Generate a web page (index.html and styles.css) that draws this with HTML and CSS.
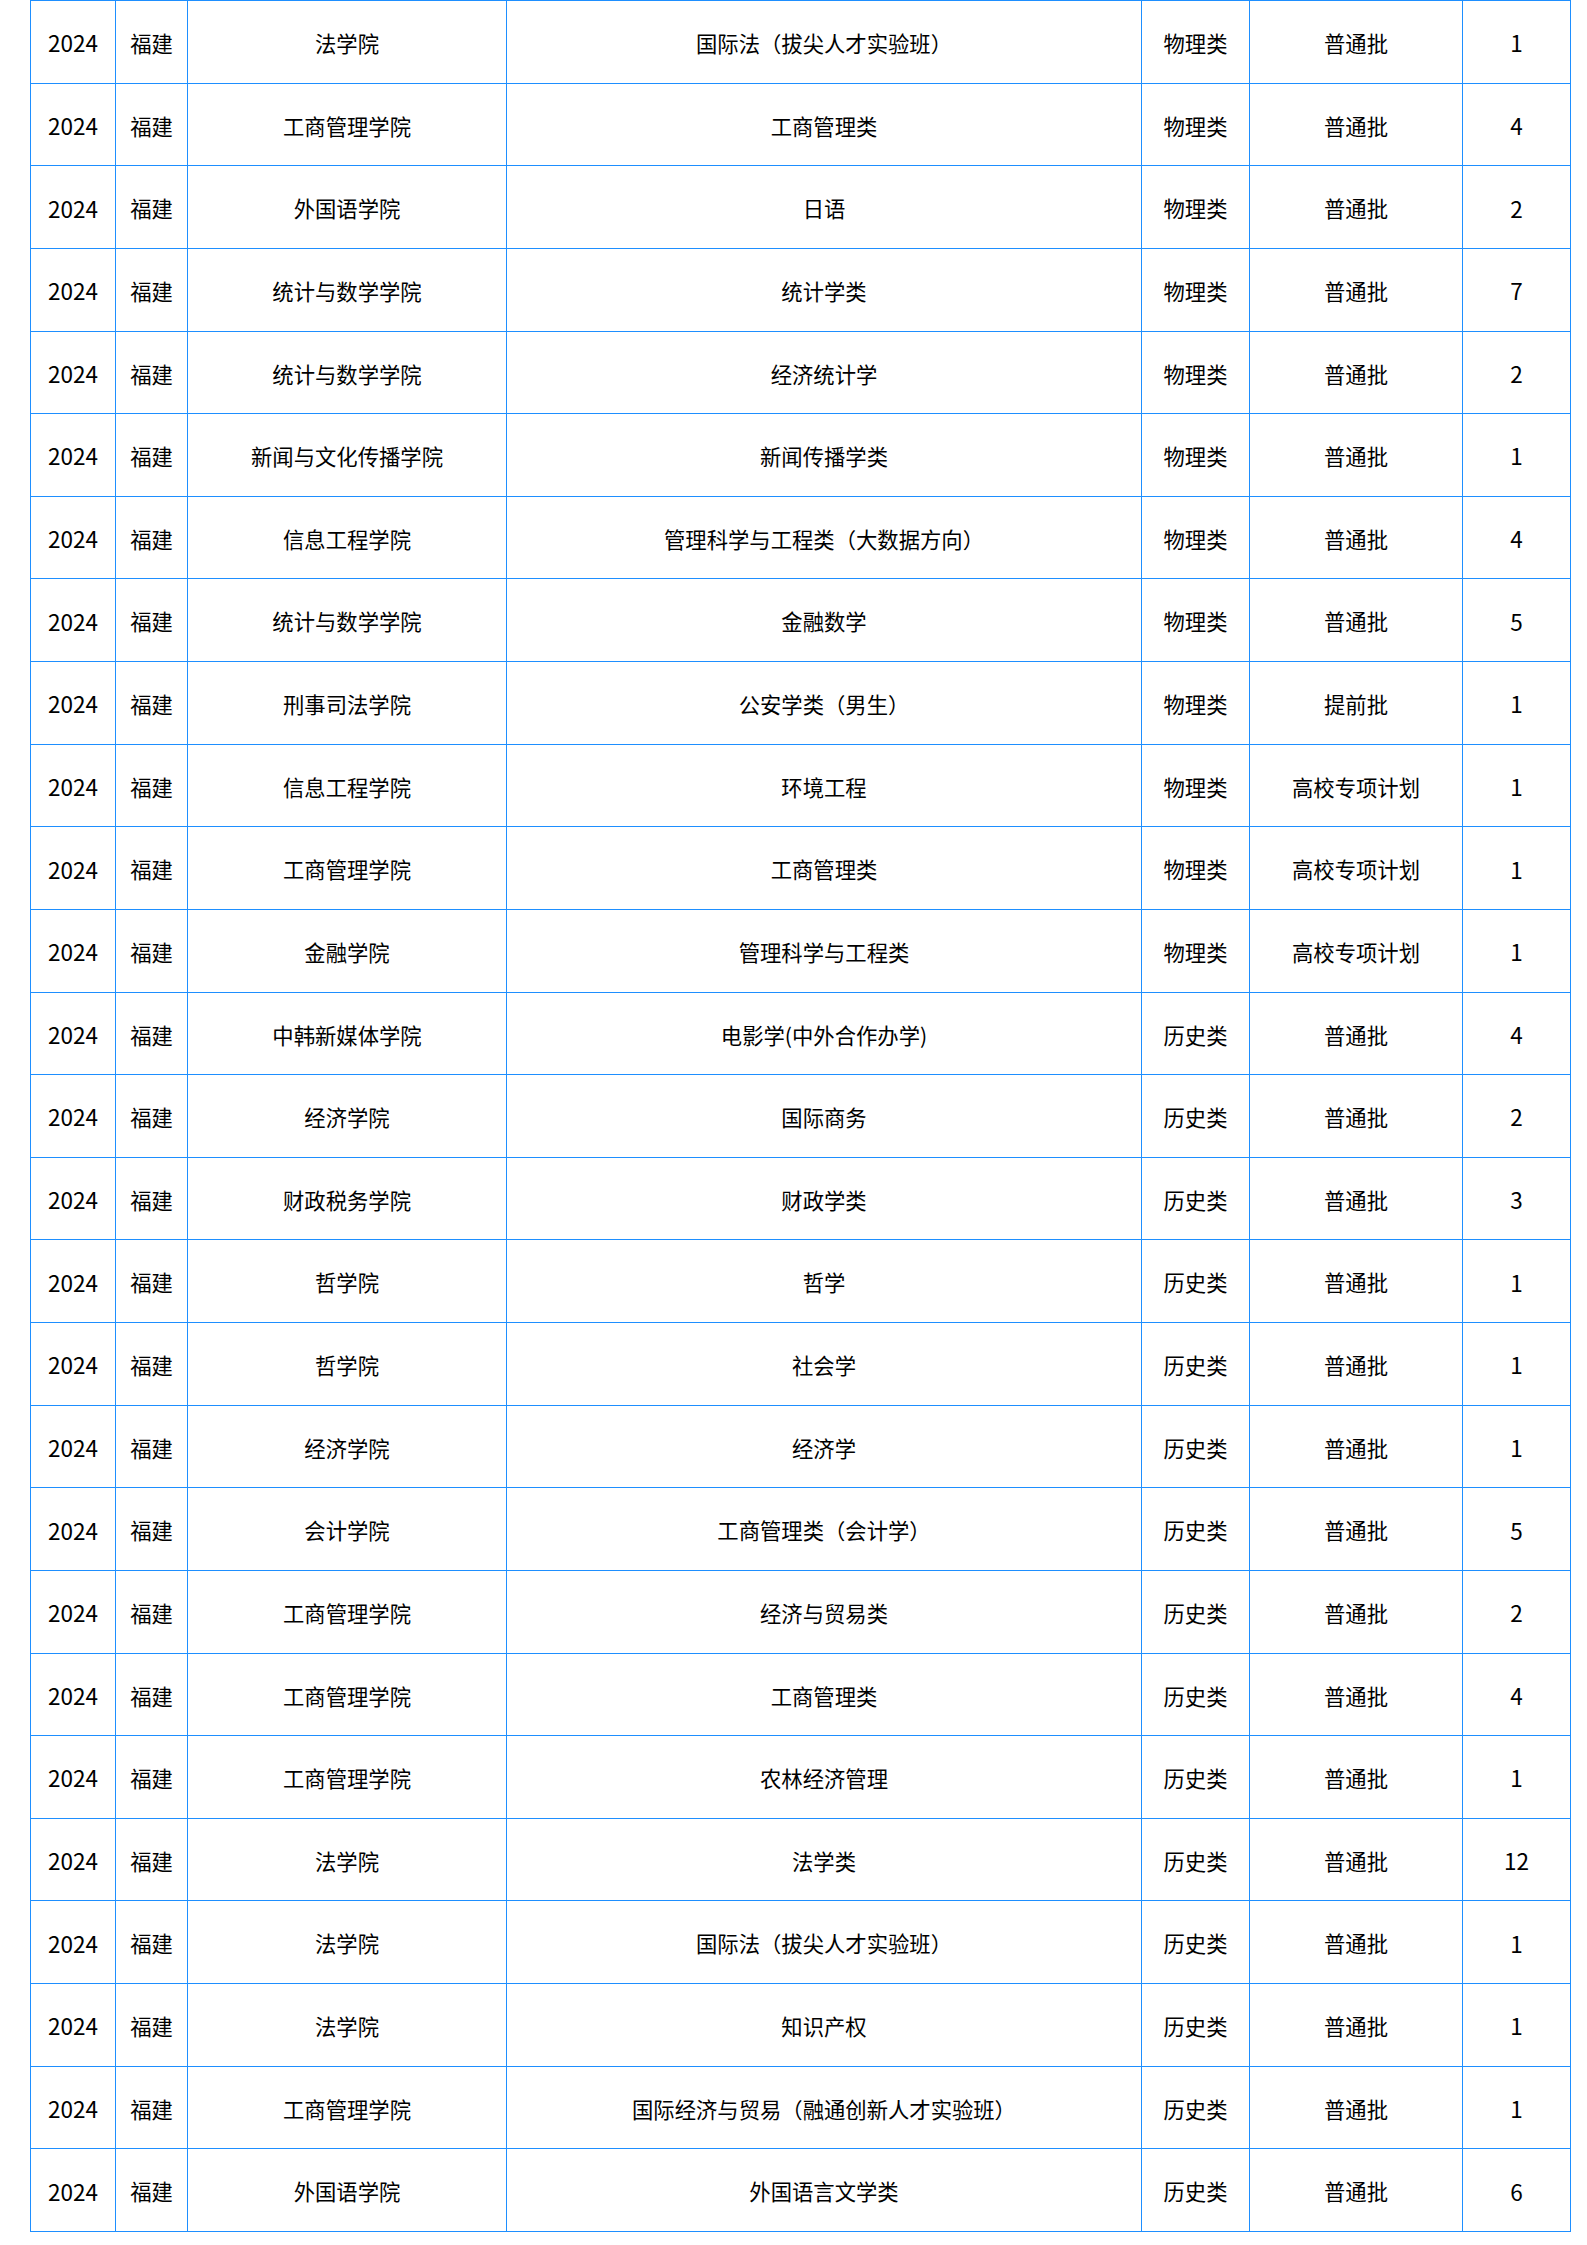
FILE: index.html
```html
<!DOCTYPE html>
<html lang="zh-CN">
<head>
<meta charset="utf-8">
<title>招生计划</title>
<link rel="stylesheet" href="styles.css">
</head>
<body>
<table class="plan">
<colgroup>
<col class="c-year"><col class="c-prov"><col class="c-college"><col class="c-major"><col class="c-subj"><col class="c-batch"><col class="c-num">
</colgroup>
<tbody>
<tr><td class="n">2024</td><td>福建</td><td>法学院</td><td>国际法（拔尖人才实验班）</td><td>物理类</td><td>普通批</td><td class="n">1</td></tr>
<tr><td class="n">2024</td><td>福建</td><td>工商管理学院</td><td>工商管理类</td><td>物理类</td><td>普通批</td><td class="n">4</td></tr>
<tr><td class="n">2024</td><td>福建</td><td>外国语学院</td><td>日语</td><td>物理类</td><td>普通批</td><td class="n">2</td></tr>
<tr><td class="n">2024</td><td>福建</td><td>统计与数学学院</td><td>统计学类</td><td>物理类</td><td>普通批</td><td class="n">7</td></tr>
<tr><td class="n">2024</td><td>福建</td><td>统计与数学学院</td><td>经济统计学</td><td>物理类</td><td>普通批</td><td class="n">2</td></tr>
<tr><td class="n">2024</td><td>福建</td><td>新闻与文化传播学院</td><td>新闻传播学类</td><td>物理类</td><td>普通批</td><td class="n">1</td></tr>
<tr><td class="n">2024</td><td>福建</td><td>信息工程学院</td><td>管理科学与工程类（大数据方向）</td><td>物理类</td><td>普通批</td><td class="n">4</td></tr>
<tr><td class="n">2024</td><td>福建</td><td>统计与数学学院</td><td>金融数学</td><td>物理类</td><td>普通批</td><td class="n">5</td></tr>
<tr><td class="n">2024</td><td>福建</td><td>刑事司法学院</td><td>公安学类（男生）</td><td>物理类</td><td>提前批</td><td class="n">1</td></tr>
<tr><td class="n">2024</td><td>福建</td><td>信息工程学院</td><td>环境工程</td><td>物理类</td><td>高校专项计划</td><td class="n">1</td></tr>
<tr><td class="n">2024</td><td>福建</td><td>工商管理学院</td><td>工商管理类</td><td>物理类</td><td>高校专项计划</td><td class="n">1</td></tr>
<tr><td class="n">2024</td><td>福建</td><td>金融学院</td><td>管理科学与工程类</td><td>物理类</td><td>高校专项计划</td><td class="n">1</td></tr>
<tr><td class="n">2024</td><td>福建</td><td>中韩新媒体学院</td><td>电影学(中外合作办学)</td><td>历史类</td><td>普通批</td><td class="n">4</td></tr>
<tr><td class="n">2024</td><td>福建</td><td>经济学院</td><td>国际商务</td><td>历史类</td><td>普通批</td><td class="n">2</td></tr>
<tr><td class="n">2024</td><td>福建</td><td>财政税务学院</td><td>财政学类</td><td>历史类</td><td>普通批</td><td class="n">3</td></tr>
<tr><td class="n">2024</td><td>福建</td><td>哲学院</td><td>哲学</td><td>历史类</td><td>普通批</td><td class="n">1</td></tr>
<tr><td class="n">2024</td><td>福建</td><td>哲学院</td><td>社会学</td><td>历史类</td><td>普通批</td><td class="n">1</td></tr>
<tr><td class="n">2024</td><td>福建</td><td>经济学院</td><td>经济学</td><td>历史类</td><td>普通批</td><td class="n">1</td></tr>
<tr><td class="n">2024</td><td>福建</td><td>会计学院</td><td>工商管理类（会计学）</td><td>历史类</td><td>普通批</td><td class="n">5</td></tr>
<tr><td class="n">2024</td><td>福建</td><td>工商管理学院</td><td>经济与贸易类</td><td>历史类</td><td>普通批</td><td class="n">2</td></tr>
<tr><td class="n">2024</td><td>福建</td><td>工商管理学院</td><td>工商管理类</td><td>历史类</td><td>普通批</td><td class="n">4</td></tr>
<tr><td class="n">2024</td><td>福建</td><td>工商管理学院</td><td>农林经济管理</td><td>历史类</td><td>普通批</td><td class="n">1</td></tr>
<tr><td class="n">2024</td><td>福建</td><td>法学院</td><td>法学类</td><td>历史类</td><td>普通批</td><td class="n">12</td></tr>
<tr><td class="n">2024</td><td>福建</td><td>法学院</td><td>国际法（拔尖人才实验班）</td><td>历史类</td><td>普通批</td><td class="n">1</td></tr>
<tr><td class="n">2024</td><td>福建</td><td>法学院</td><td>知识产权</td><td>历史类</td><td>普通批</td><td class="n">1</td></tr>
<tr><td class="n">2024</td><td>福建</td><td>工商管理学院</td><td>国际经济与贸易（融通创新人才实验班）</td><td>历史类</td><td>普通批</td><td class="n">1</td></tr>
<tr><td class="n">2024</td><td>福建</td><td>外国语学院</td><td>外国语言文学类</td><td>历史类</td><td>普通批</td><td class="n">6</td></tr>
</tbody>
</table>
</body>
</html>
```

FILE: styles.css
```css
html, body {
  margin: 0;
  padding: 0;
  background: #ffffff;
}

body {
  padding-left: 30px;
  font-family: "Noto Sans CJK SC", "Noto Sans", sans-serif;
  color: #000000;
}

.plan {
  border-collapse: collapse;
  table-layout: fixed;
  width: 1541px;
  font-size: 21.33px;
}

.c-year { width: 85px; }
.c-prov { width: 72px; }
.c-college { width: 319px; }
.c-major { width: 635px; }
.c-subj { width: 108px; }
.c-batch { width: 213px; }
.c-num { width: 108px; }

.plan td {
  border: 1px solid #1e8fff;
  height: 79.63px;
  padding: 2px 0 0 0;
  text-align: center;
  vertical-align: middle;
  line-height: 1.2;
  white-space: nowrap;
}

.plan td.n {
  font-size: 22.5px;
}
```
